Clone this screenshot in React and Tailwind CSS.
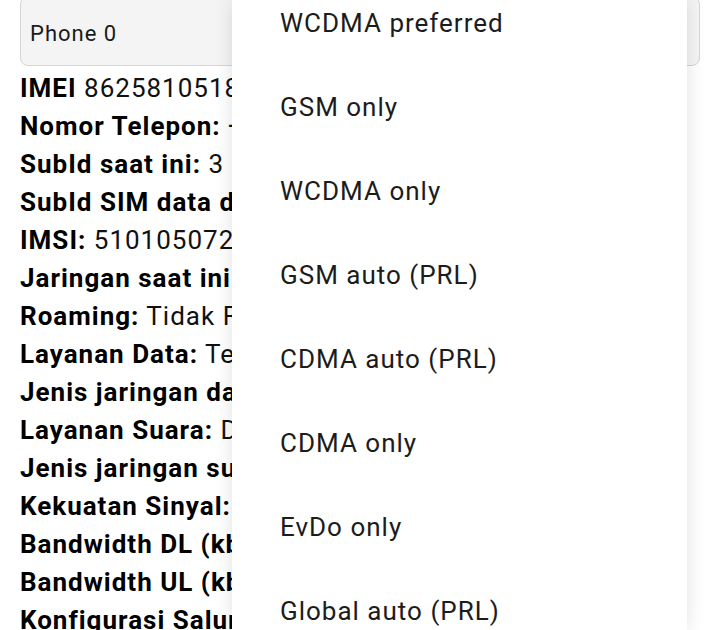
import React from 'react';

const rows = [
  ['IMEI', '862581051834927'],
  ['Nomor Telepon:', '+6281234567890'],
  ['SubId saat ini:', '3'],
  ['SubId SIM data default:', '3'],
  ['IMSI:', '510105072394816'],
  ['Jaringan saat ini:', 'Telkomsel'],
  ['Roaming:', 'Tidak Roaming'],
  ['Layanan Data:', 'Terhubung'],
  ['Jenis jaringan data:', 'LTE'],
  ['Layanan Suara:', 'Dalam Layanan'],
  ['Jenis jaringan suara:', 'LTE'],
  ['Kekuatan Sinyal:', '-98 dBm 42 asu'],
  ['Bandwidth DL (kbps):', '20000'],
  ['Bandwidth UL (kbps):', '20000'],
  ['Konfigurasi Saluran Fisik:', '[]'],
];

const options = [
  'WCDMA preferred',
  'GSM only',
  'WCDMA only',
  'GSM auto (PRL)',
  'CDMA auto (PRL)',
  'CDMA only',
  'EvDo only',
  'Global auto (PRL)',
];

export default function App() {
  return (
    <div
      className="relative w-[720px] h-[630px] overflow-hidden bg-white"
      style={{ fontFamily: 'Roboto, "Noto Sans", sans-serif' }}
    >
      {/* Phone picker */}
      <div className="ml-[20px] mr-[20px] -mt-[4px] h-[70px] rounded-lg border border-[#d6d6d6] bg-[#f4f4f4] flex items-end pb-[20px] pl-[9px]">
        <span className="text-[22px] leading-none tracking-[1px] text-[#1a1a1a]">Phone 0</span>
      </div>

      {/* Radio info, the part the open menu leaves visible */}
      <div className="mt-[3px] ml-[20px] w-[212px] h-[561px] overflow-hidden text-[26px] leading-[38px] tracking-[1px] text-[#111]">
        {rows.map(([label, value]) => (
          <div key={label} className="whitespace-nowrap">
            <span className="font-bold text-black">{label}</span> {value}
          </div>
        ))}
      </div>

      {/* Preferred network type menu */}
      <div className="absolute top-0 left-[232px] w-[455px] h-full overflow-hidden bg-white shadow-[0_0_18px_rgba(0,0,0,0.12)]">
        <div className="-mt-[19px]">
          {options.map((opt) => (
            <div
              key={opt}
              className="h-[84px] flex items-center pl-[48px] text-[26px] tracking-[1px] text-[#1c1c1c]"
            >
              {opt}
            </div>
          ))}
        </div>
      </div>
    </div>
  );
}
